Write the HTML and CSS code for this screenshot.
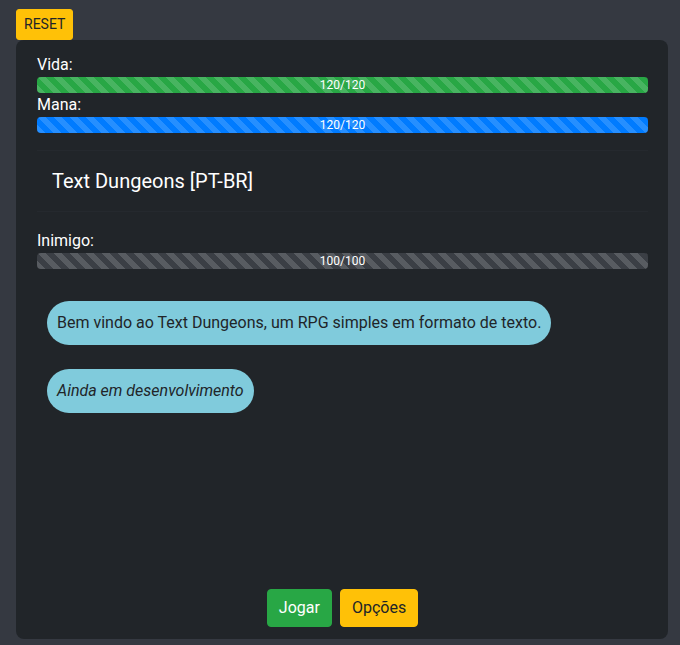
FILE: index.html
```html
<!DOCTYPE html>
<html lang="pt-BR">
<head>
<meta charset="utf-8">
<title>Text Dungeons</title>
<link rel="stylesheet" href="styles.css">
</head>
<body>
<div class="page">
  <div class="topbar"><button class="btn btn-sm btn-warning">RESET</button></div>
  <div class="game-card">
    <div class="stat">
      <div class="stat-label">Vida:</div>
      <div class="progress"><div class="progress-bar bar-success">120/120</div></div>
    </div>
    <div class="stat">
      <div class="stat-label">Mana:</div>
      <div class="progress"><div class="progress-bar bar-primary">120/120</div></div>
    </div>
    <div class="title-box"><h1 class="title">Text Dungeons [PT-BR]</h1></div>
    <div class="stat">
      <div class="stat-label">Inimigo:</div>
      <div class="progress"><div class="progress-bar bar-dark">100/100</div></div>
    </div>
    <div class="messages">
      <div class="bubble">Bem vindo ao Text Dungeons, um RPG simples em formato de texto.</div>
      <div class="bubble"><em>Ainda em desenvolvimento</em></div>
    </div>
    <div class="actions">
      <button class="btn btn-success">Jogar</button>
      <button class="btn btn-warning">Opções</button>
    </div>
  </div>
</div>
</body>
</html>
```
FILE: styles.css
```css
* { box-sizing: border-box; }
html, body { margin: 0; padding: 0; }
body {
  background: #353941;
  font-family: Roboto, "Liberation Sans", sans-serif;
  font-size: 16px;
  line-height: 1.5;
  color: #f8f9fa;
  height: 645px;
  overflow: hidden;
}
.page { padding: 9px 12px 6px 16px; height: 645px; display: flex; flex-direction: column; }
.topbar { display: flex; }
.btn {
  font-family: inherit;
  border: 1px solid transparent;
  border-radius: 4px;
  font-size: 16px;
  line-height: 24px;
  padding: 6px 11px;
  cursor: pointer;
}
.btn-sm { font-size: 14px; line-height: 21px; padding: 4px 7px; border-radius: 3px; }
.btn-warning { background: #ffc107; border-color: #ffc107; color: #212529; }
.btn-success { background: #28a745; border-color: #28a745; color: #fff; }
.game-card {
  flex: 1;
  background: #212529;
  border-radius: 8px;
  padding: 13px 20px 12px 21px;
  display: flex;
  flex-direction: column;
}
.stat-label { font-size: 16px; line-height: 24px; color: #fff; }
.progress {
  height: 16px;
  border-radius: 4px;
  overflow: hidden;
  background: #2c3035;
  display: flex;
}
.progress-bar {
  width: 100%;
  height: 16px;
  color: #fff;
  font-size: 12px;
  line-height: 16px;
  text-align: center;
  background-image: linear-gradient(45deg, rgba(255,255,255,.15) 25%, transparent 25%, transparent 50%, rgba(255,255,255,.15) 50%, rgba(255,255,255,.15) 75%, transparent 75%, transparent);
  background-size: 16px 16px;
}
.bar-success { background-color: #28a745; }
.bar-primary { background-color: #007bff; }
.bar-dark { background-color: #3b3f45; }
.title-box {
  margin: 17px 0 17px;
  border-top: 1px solid #25292e;
  border-bottom: 1px solid #25292e;
  padding: 15px 15px;
}
.title {
  margin: 0;
  font-size: 20px;
  line-height: 30px;
  font-weight: 400;
  color: #fff;
}
.messages {
  flex: 1;
  padding: 32px 0 0 10px;
  display: flex;
  flex-direction: column;
  align-items: flex-start;
  gap: 24px;
}
.bubble {
  background: #80cbdc;
  color: #212529;
  border-radius: 22px;
  padding: 10px 10px;
  font-size: 16px;
  line-height: 24px;
}
.bubble em { font-style: italic; }
.actions { display: flex; justify-content: center; gap: 8px; }
```
